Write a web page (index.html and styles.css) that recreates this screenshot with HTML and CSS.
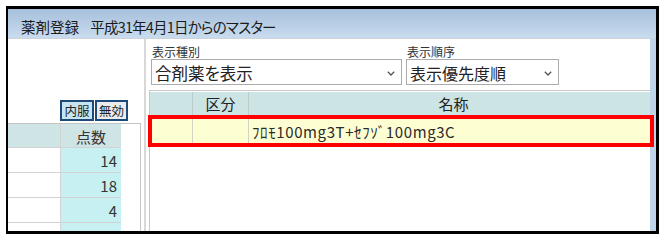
FILE: index.html
```html
<!DOCTYPE html>
<html lang="ja">
<head>
<meta charset="utf-8">
<title>薬剤登録</title>
<link rel="stylesheet" href="styles.css">
</head>
<body>
<div class="window">
  <div class="titlebar">薬剤登録 <span class="sub">平成31年4月1日からのマスター</span></div>
  <div class="wbody">
    <div class="main">
      <div class="left">
        <div class="btns"><span class="btn on">内服</span><span class="btn">無効</span></div>
        <div class="ltable">
          <div class="lrow lhead"><div class="c1"></div><div class="c2">点数</div></div>
          <div class="lrow"><div class="c1"></div><div class="c2">14</div></div>
          <div class="lrow"><div class="c1"></div><div class="c2">18</div></div>
          <div class="lrow"><div class="c1"></div><div class="c2">4</div></div>
          <div class="lrow"><div class="c1"></div><div class="c2">5</div></div>
        </div>
      </div>
      <div class="splitter"></div>
      <div class="right">
        <div class="filters">
          <div class="field">
            <div class="lbl">表示種別</div>
            <div class="sel sel-kind"><span>合剤薬を表示</span><svg class="chev" width="8" height="5" viewBox="0 0 8 5"><polyline points="0.8,0.8 4,4 7.2,0.8" fill="none" stroke="#555" stroke-width="1.3"/></svg></div>
          </div>
          <div class="field">
            <div class="lbl">表示順序</div>
            <div class="sel sel-order"><span>表示優先度順</span><svg class="chev" width="8" height="5" viewBox="0 0 8 5"><polyline points="0.8,0.8 4,4 7.2,0.8" fill="none" stroke="#555" stroke-width="1.3"/></svg></div>
          </div>
        </div>
        <div class="grid">
          <div class="grow ghead"><div class="g1"></div><div class="g2">区分</div><div class="g3">名称</div></div>
          <div class="grow gsel"><div class="g1"></div><div class="g2"></div><div class="g3 name">ﾌﾛﾓ100mg3T+ｾﾌｿﾞ100mg3C</div><div class="mark"></div></div>
        </div>
      </div>
    </div>
    <div class="frame-r"></div>
  </div>
</div>
</body>
</html>
```
FILE: styles.css
```css
* { box-sizing: border-box; }
html, body { margin: 0; background: #fff; }
body {
  font-family: "Noto Sans CJK JP", "Noto Sans", sans-serif;
  font-feature-settings: "palt";
  color: #222;
}
.window {
  margin: 6px 0 0 6px;
  width: 653px;
  height: 228px;
  border: solid #000;
  border-width: 3px 3px 3px 2px;
  display: flex;
  flex-direction: column;
}
.titlebar {
  flex: none;
  height: 29px;
  padding: 7px 0 0 13px;
  font-size: 14.5px;
  line-height: 21px;
  word-spacing: 8px;
  color: #1b1b1b;
  background: linear-gradient(#a6bfdb, #c9dcef);
  white-space: nowrap;
}
.titlebar .sub { letter-spacing: -0.8px; word-spacing: 0; }
.wbody { flex: 1; display: flex; min-height: 0; }
.main {
  flex: 1;
  display: flex;
  border-top: 1px solid #cdd3d9;
  background: #fff;
}
.frame-r { flex: none; width: 6px; background: #bdd4eb; }

.left { flex: none; width: 133px; overflow: hidden; padding-top: 61px; }
.btns { display: flex; gap: 1px; margin-left: 52px; height: 21px; }
.btn {
  width: 34px;
  height: 21px;
  border: 2px solid #1d4a78;
  font-size: 12.5px;
  line-height: 17px;
  text-align: center;
  background: #ececec;
  color: #222;
}
.btn + .btn { width: 33px; }
.btn.on { background: #c7e4f1; }
.ltable {
  margin-top: 2px;
  border-top: 1px solid #c4c4c4;
  border-right: 1px solid #c4c4c4;
  height: 200px;
}
.lrow { display: flex; height: 25px; }
.lrow.lhead { height: 24px; }
.c1 { width: 53px; border-right: 1px solid #d2d2d2; border-bottom: 1px solid #d2d2d2; }
.c2 {
  width: 60px;
  border-bottom: 1px solid #d2d2d2;
  background: #c6f0f1;
  text-align: right;
  padding: 1px 4px 0 0;
  font-size: 15px;
  line-height: 23px;
  color: #333;
}
.lhead .c1, .lhead .c2 { background: #cfe4e4; }
.lhead .c2 { text-align: center; padding: 1px 0 0; }

.splitter {
  flex: none;
  width: 8px;
  border-left: 3px solid #fff;
  border-right: 3px solid #fff;
  background: #d8d8d8;
}

.right { flex: 1; display: flex; flex-direction: column; min-width: 0; }
.filters { flex: none; display: flex; gap: 4px; height: 51px; padding: 5px 0 0 2px; }
.lbl { font-size: 12px; line-height: 15px; color: #333; padding-left: 1px; }
.sel {
  height: 26px;
  border: 1px solid #ababab;
  display: flex;
  align-items: center;
  justify-content: space-between;
  padding: 2px 6px 0 3px;
  font-size: 16.5px;
  color: #222;
}
.sel-kind { width: 251px; }
.sel-order { width: 153px; }
.sel-order span { font-size: 16px; }
.chev { flex: none; }

.grid {
  flex: 1;
  border-top: 1px solid #c8c8c8;
  border-left: 1px solid #c8c8c8;
  padding-top: 1px;
}
.grow { display: flex; }
.ghead { height: 23px; background: #cde4e4; font-size: 15px; line-height: 23px; color: #222; }
.g1 { flex: none; width: 43px; border-right: 1px solid #bccccc; }
.g2 { flex: none; width: 56px; border-right: 1px solid #bccccc; text-align: center; }
.g3 { flex: 1; text-align: center; padding-left: 8px; }
.gsel { position: relative; height: 32px; background: #fefed3; }
.gsel .g1, .gsel .g2 { border-right-color: #d4d4c4; }
.name {
  text-align: left;
  padding: 2px 0 0 3px;
  font-size: 15px;
  line-height: 30px;
  letter-spacing: 0.6px;
  color: #2a2a2a;
  white-space: nowrap;
}
.mark {
  position: absolute;
  left: -2px;
  top: 0;
  width: 506px;
  height: 32px;
  border: 4px solid #ff0000;
}
```
